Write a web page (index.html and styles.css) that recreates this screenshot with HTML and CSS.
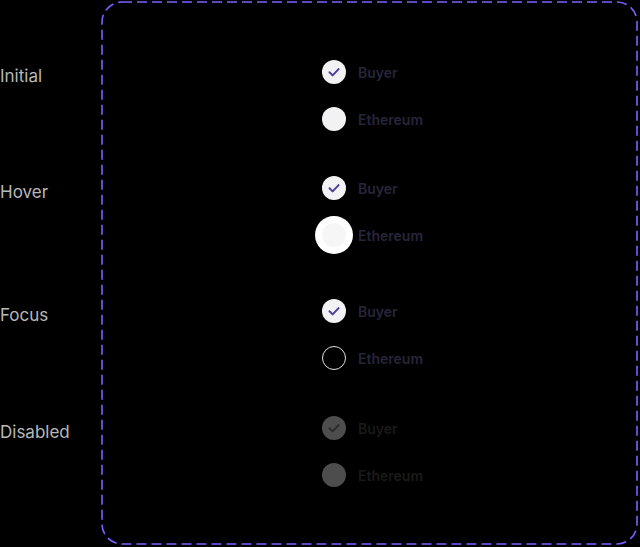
FILE: index.html
```html
<!DOCTYPE html>
<html lang="en">
<head>
    <meta charset="UTF-8">
    <title>Radio states</title>
    <link rel="stylesheet" href="styles.css">
</head>
<body>
    <div class="board">
        <!-- Dashed component frame -->
        <svg class="frame" width="537" height="544" viewBox="0 0 537 544">
            <rect x="1" y="1" width="535" height="542" rx="20" ry="20"></rect>
        </svg>

        <!-- Initial -->
        <div class="state-label row-1">Initial</div>
        <div class="group row-1">
            <div class="radio">
                <span class="dot checked"><svg viewBox="0 0 24 24"><path d="M7.5 12.3l3.1 3.1 6-6.3"/></svg></span>
                <span class="text">Buyer</span>
            </div>
            <div class="radio">
                <span class="dot"></span>
                <span class="text">Ethereum</span>
            </div>
        </div>

        <!-- Hover -->
        <div class="state-label row-2">Hover</div>
        <div class="group row-2">
            <div class="radio">
                <span class="dot checked"><svg viewBox="0 0 24 24"><path d="M7.5 12.3l3.1 3.1 6-6.3"/></svg></span>
                <span class="text">Buyer</span>
            </div>
            <div class="radio">
                <span class="dot hover"></span>
                <span class="text">Ethereum</span>
            </div>
        </div>

        <!-- Focus -->
        <div class="state-label row-3">Focus</div>
        <div class="group row-3">
            <div class="radio">
                <span class="dot checked"><svg viewBox="0 0 24 24"><path d="M7.5 12.3l3.1 3.1 6-6.3"/></svg></span>
                <span class="text">Buyer</span>
            </div>
            <div class="radio">
                <span class="dot focus"></span>
                <span class="text">Ethereum</span>
            </div>
        </div>

        <!-- Disabled -->
        <div class="state-label row-4">Disabled</div>
        <div class="group row-4 disabled">
            <div class="radio">
                <span class="dot checked"><svg viewBox="0 0 24 24"><path d="M7.5 12.3l3.1 3.1 6-6.3"/></svg></span>
                <span class="text">Buyer</span>
            </div>
            <div class="radio">
                <span class="dot"></span>
                <span class="text">Ethereum</span>
            </div>
        </div>
    </div>
</body>
</html>
```

FILE: styles.css
```css
/* General styles */
body {
    margin: 0;
    background-color: #000;
    font-family: Inter, "Noto Sans", sans-serif;
}

.board {
    display: grid;
    grid-template-columns: 101px 537px;
    grid-template-rows: 60px 116px 123px 117px 71px 58px;
}

.frame {
    grid-column: 2;
    grid-row: 1 / -1;
    margin-top: 1px;
}

.frame rect {
    fill: none;
    stroke: #7b61ff;
    stroke-width: 1.6;
    stroke-dasharray: 10 5;
}

.row-1 { grid-row: 2; }
.row-2 { grid-row: 3; }
.row-3 { grid-row: 4; }
.row-4 { grid-row: 5; }

/* State names on the left */
.state-label {
    grid-column: 1;
    align-self: start;
    padding-top: 4px;
    font-size: 17px;
    line-height: 24px;
    color: #b8b8b8;
}

/* Radio groups */
.group {
    grid-column: 2;
    align-self: start;
    justify-self: start;
    margin-left: 221px;
    display: flex;
    flex-direction: column;
    gap: 23px;
}

.radio {
    display: flex;
    align-items: center;
    gap: 12px;
    height: 24px;
}

.dot {
    width: 24px;
    height: 24px;
    box-sizing: border-box;
    border-radius: 50%;
    background-color: #f2f2f4;
    display: flex;
    align-items: center;
    justify-content: center;
}

.dot svg {
    width: 24px;
    height: 24px;
}

.dot path {
    fill: none;
    stroke: #4a3f9e;
    stroke-width: 2;
    stroke-linecap: round;
    stroke-linejoin: round;
}

.dot.hover {
    background-color: #f6f6f6;
    box-shadow: 0 0 0 7px #fff;
}

.dot.focus {
    background-color: transparent;
    border: 1.5px solid #e2e2e2;
}

.text {
    font-size: 14px;
    font-weight: 600;
    color: #27253a;
}

/* Disabled state */
.disabled .dot {
    background-color: #4d4d4d;
}

.disabled .dot path {
    stroke: #2c2c2c;
}

.disabled .text {
    color: #1a1a1a;
}
```
